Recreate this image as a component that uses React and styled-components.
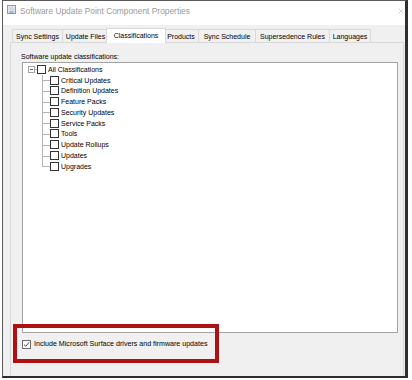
import React from "react";
import styled, { createGlobalStyle, css } from "styled-components";

const Global = createGlobalStyle`
  html, body { margin: 0; padding: 0; background: #ffffff; }
  body { font-family: "Liberation Sans", Arial, sans-serif; }
  * { box-sizing: border-box; }
`;

const Window = styled.div`
  margin-left: 2px;
  width: 406px;
  height: 378px;
  display: flex;
  flex-direction: column;
  border-top: 1px solid #5a5a5a;
  border-left: 1px solid #5a5a5a;
  border-right: 3px solid #2e2e2e;
  border-bottom: 2px solid #2e2e2e;
  background: #f0f0f0;
  overflow: hidden;
`;

const TitleBar = styled.div`
  height: 24px;
  flex: none;
  display: flex;
  align-items: flex-start;
  padding: 4px 0 0 4px;
  background: #ffffff;
  gap: 4px;
`;

const TitleText = styled.span`
  font-size: 8.4px;
  line-height: 11px;
  margin-top: 1px;
  color: #9a9a9a;
  white-space: nowrap;
`;

const CloseGlyph = styled.svg`
  margin-left: auto;
  margin-top: 3px;
  margin-right: 1px;
  flex: none;
`;

const Body = styled.div`
  flex: 1;
  display: flex;
  flex-direction: column;
  padding: 3px 1px 0 7px;
  overflow: hidden;
`;

const TabStrip = styled.div`
  display: flex;
  align-items: flex-end;
  height: 14px;
  padding-left: 2px;
  position: relative;
  z-index: 1;
`;

const Tab = styled.div`
  width: ${(p) => p.$w}px;
  height: 13px;
  flex: none;
  display: flex;
  align-items: center;
  justify-content: center;
  font-size: 7px;
  line-height: 9px;
  color: #000;
  white-space: nowrap;
  background: #f0f0f0;
  border: 1px solid #d9d9d9;
  border-bottom: none;
  & + & { margin-left: -1px; }
  ${(p) =>
    p.$active &&
    css`
      width: ${p.$w + 4}px;
      height: 15px;
      margin: 0 -2px -1px -3px !important;
      background: #ffffff;
      position: relative;
      z-index: 2;
      padding-bottom: 2px;
    `}
`;

const Panel = styled.div`
  position: relative;
  height: 360px;
  flex: none;
  border: 1px solid #d9d9d9;
  background: #f0f0f0;
  padding: 9px 5px 0 10px;
  display: flex;
  flex-direction: column;
`;

const GroupLabel = styled.div`
  font-size: 7px;
  line-height: 10px;
  color: #000;
  white-space: nowrap;
`;

const TreeBox = styled.div`
  margin-left: 1px;
  height: 271px;
  background: #ffffff;
  border: 1px solid #a3a3a3;
  padding-top: 1px;
  display: flex;
  flex-direction: column;
`;

const Row = styled.div`
  height: 10.78px;
  display: flex;
  align-items: center;
  flex: none;
  padding-left: ${(p) => p.$indent || 0}px;
`;

const Expander = styled.div`
  width: 7px;
  height: 7px;
  border: 1px solid #a0a0a0;
  position: relative;
  flex: none;
  &::after {
    content: "";
    position: absolute;
    left: 1px;
    right: 1px;
    top: 2px;
    height: 1px;
    background: #606060;
  }
`;

const Stub = styled.div`
  width: 2px;
  height: 1px;
  background: #b0b0b0;
  flex: none;
`;

const Branch = styled.div`
  width: 8px;
  align-self: stretch;
  position: relative;
  flex: none;
  &::before {
    content: "";
    position: absolute;
    left: 0;
    top: 0;
    width: 1px;
    height: ${(p) => (p.$last ? "50%" : "100%")};
    background: #b4b4b4;
  }
  &::after {
    content: "";
    position: absolute;
    left: 0;
    right: 0;
    top: 50%;
    height: 1px;
    background: #b4b4b4;
  }
`;

const Check = styled.div`
  width: 9px;
  height: 9px;
  flex: none;
  background: #ffffff;
  border: 1px solid ${(p) => (p.$soft ? "#6e6e6e" : "#333333")};
  display: flex;
  align-items: center;
  justify-content: center;
`;

const ItemLabel = styled.span`
  font-size: 7px;
  line-height: 9px;
  margin-left: 2px;
  color: #000;
  white-space: nowrap;
`;

const OptionRow = styled.div`
  margin-top: 6px;
  margin-left: 1px;
  height: 10px;
  display: flex;
  align-items: center;
  gap: 3px;
`;

const OptionLabel = styled.span`
  font-size: 7.1px;
  line-height: 9px;
  color: #000;
  white-space: nowrap;
`;

const Highlight = styled.div`
  position: absolute;
  left: 2px;
  top: 281px;
  width: 206px;
  height: 39px;
  border: 4px solid #b00f14;
  pointer-events: none;
`;

const TitleIcon = () => (
  <svg width="9" height="9" viewBox="0 0 9 9" style={{ flex: "none" }}>
    <rect x="0.5" y="0.5" width="8" height="8" fill="#e4e8ec" stroke="#8d9aa6" />
    <rect x="2" y="2" width="5" height="3.5" fill="#c9dcee" />
    <rect x="2.5" y="6.5" width="4" height="1" fill="#3d8fd6" />
  </svg>
);

const tabs = [
  { label: "Sync Settings", w: 51 },
  { label: "Update Files", w: 47 },
  { label: "Classifications", w: 56, active: true },
  { label: "Products", w: 36 },
  { label: "Sync Schedule", w: 58 },
  { label: "Supersedence Rules", w: 75 },
  { label: "Languages", w: 42 },
];

const children = [
  "Critical Updates",
  "Definition Updates",
  "Feature Packs",
  "Security Updates",
  "Service Packs",
  "Tools",
  "Update Rollups",
  "Updates",
  "Upgrades",
];

export default function App() {
  return (
    <>
      <Global />
      <Window>
        <TitleBar>
          <TitleIcon />
          <TitleText>Software Update Point Component Properties</TitleText>
          <CloseGlyph width="6" height="6" viewBox="0 0 6 6">
            <path d="M0.5 0.5 L5.5 5.5 M5.5 0.5 L0.5 5.5" stroke="#c4c4c4" strokeWidth="0.8" fill="none" />
          </CloseGlyph>
        </TitleBar>
        <Body>
          <TabStrip>
            {tabs.map((t) => (
              <Tab key={t.label} $w={t.w} $active={t.active}>
                {t.label}
              </Tab>
            ))}
          </TabStrip>
          <Panel>
            <GroupLabel>Software update classifications:</GroupLabel>
            <TreeBox>
              <Row $indent={5}>
                <Expander />
                <Stub />
                <Check />
                <ItemLabel>All Classifications</ItemLabel>
              </Row>
              {children.map((c, i) => (
                <Row key={c} $indent={19}>
                  <Branch $last={i === children.length - 1} />
                  <Check />
                  <ItemLabel>{c}</ItemLabel>
                </Row>
              ))}
            </TreeBox>
            <OptionRow>
              <Check $soft>
                <svg width="7" height="7" viewBox="0 0 7 7">
                  <path d="M1 3.6 L2.8 5.3 L6 1.4" stroke="#333" strokeWidth="0.9" fill="none" />
                </svg>
              </Check>
              <OptionLabel>Include Microsoft Surface drivers and firmware updates</OptionLabel>
            </OptionRow>
            <Highlight />
          </Panel>
        </Body>
      </Window>
    </>
  );
}
